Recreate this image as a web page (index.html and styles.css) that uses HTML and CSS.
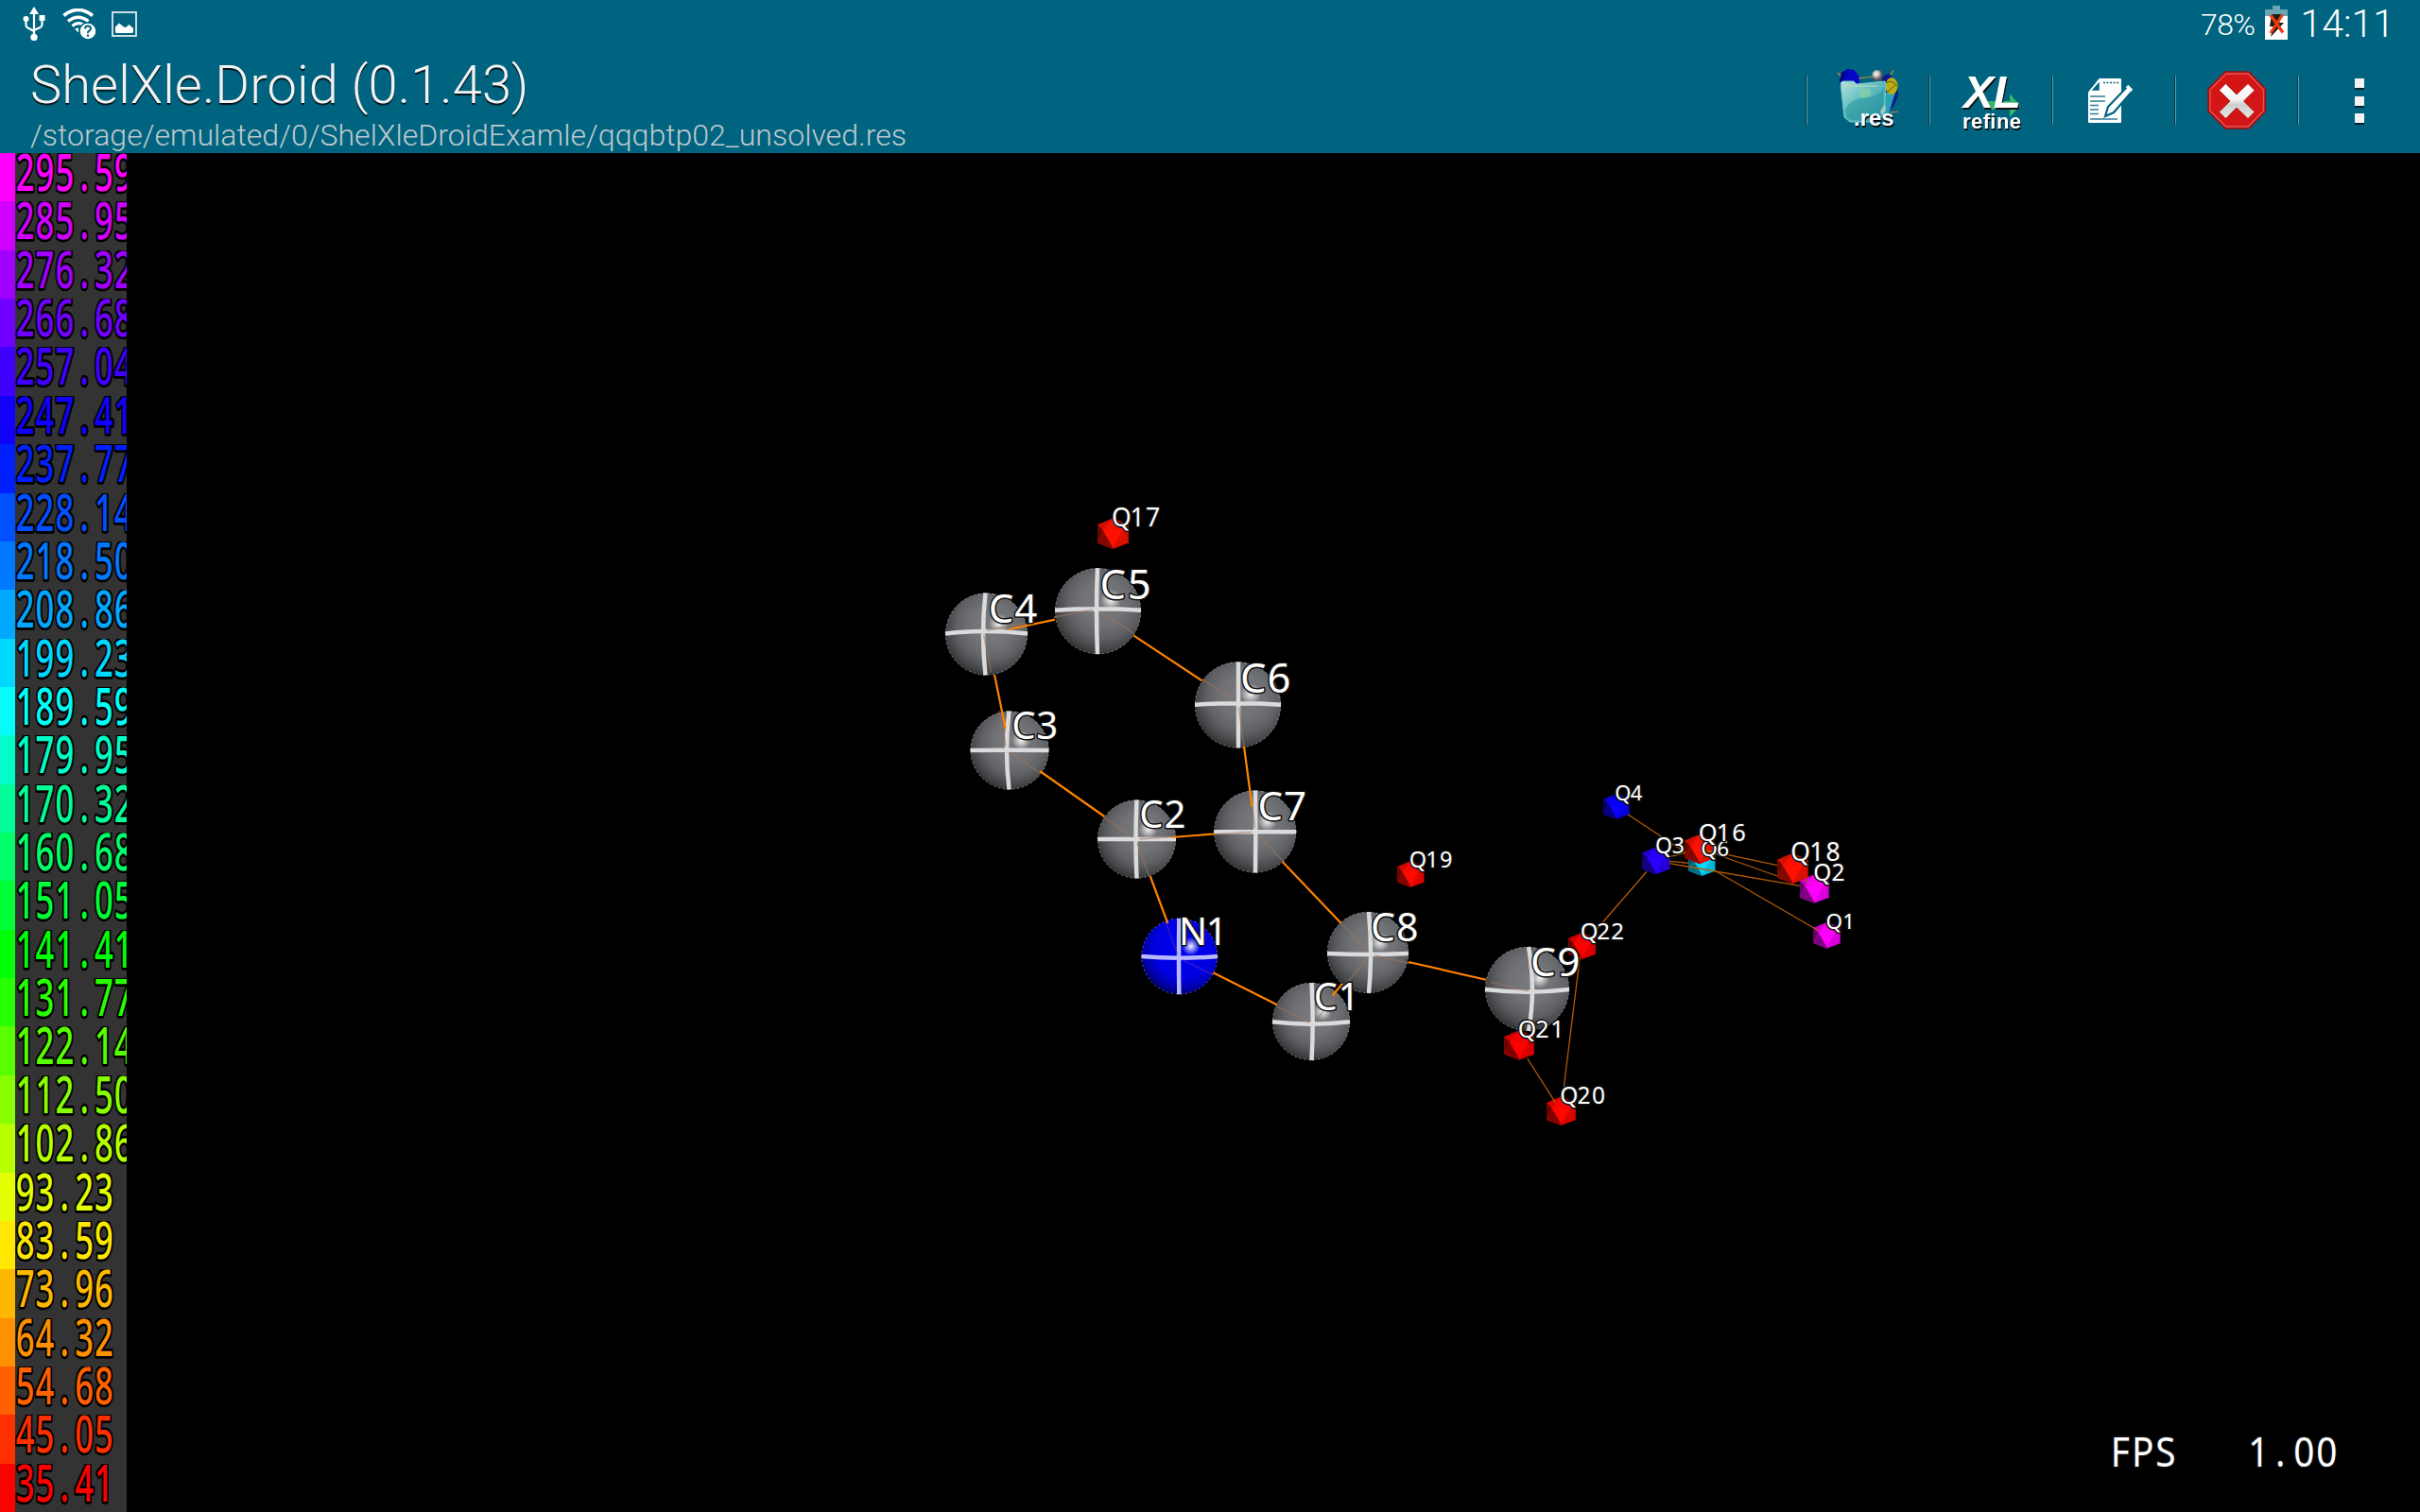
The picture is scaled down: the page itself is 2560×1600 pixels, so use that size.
FILE: index.html
```html
<!DOCTYPE html>
<html lang="en">
<head>
<meta charset="utf-8">
<title>ShelXle.Droid</title>
<link rel="stylesheet" href="styles.css">
</head>
<body>
<div class="screen">
  <header class="top">
    <div class="status">
      <svg class="st-usb" width="24" height="36" viewBox="0 0 24 36" fill="#fff" stroke="#fff">
        <path d="M12 0l5 8H7z" stroke="none"/>
        <path d="M12 6v26M3.500 13v6.500q0 2 2 3L12 26M20.500 13v6q0 2-2 3L12 25" fill="none" stroke-width="2.200"/>
        <circle cx="3.500" cy="13" r="3" stroke="none"/><rect x="17.500" y="9" width="6" height="6" stroke="none"/>
        <circle cx="12" cy="32.500" r="3.700" stroke="none"/>
      </svg>
      <svg class="st-wifi" width="36" height="33" viewBox="0 0 36 33" fill="none" stroke="#fff">
        <path d="M1.500 7.500q15-12 30.500 0" stroke-width="3.600"/>
        <path d="M6 13.500q10.500-8.500 21.500 0" stroke-width="3.400"/>
        <path d="M10.500 18.500q6-5 12-1" stroke-width="3.200"/>
        <path d="M13 21.500l4-1v5z" fill="#fff" stroke="none"/>
        <circle cx="27" cy="24" r="9" fill="#fff" stroke="#006480" stroke-width="1.500"/>
        <path d="M24 21.500q0-3 3-3t3 2.700q0 1.600-1.700 2.500T27 26" stroke="#006480" stroke-width="2"/>
        <rect x="25.900" y="27.500" width="2.200" height="2.200" fill="#006480" stroke="none"/>
      </svg>
      <svg class="st-pic" width="27" height="27" viewBox="0 0 27 27">
        <rect x="1" y="1" width="25" height="25" fill="none" stroke="#dfeaee" stroke-width="1.800"/>
        <path d="M4 22v-5.500l4-4 5 4 2 .5 3.500-3 4.500 4v4q-.5 1-2 1H6q-2 0-2-1z" fill="#fff"/>
      </svg>
      <span class="percent">78%</span>
      <svg class="st-batt" width="24" height="36" viewBox="0 0 24 36">
        <path d="M8 0h8v4h8v7H0V4h8z" fill="#6ba6b6"/><rect y="11" width="24" height="25" fill="#fff"/>
        <path d="M7 9h11l-3 9h5L6 33l3-11H5z" fill="#1c1c1c"/>
        <path d="M6 10l13 18.500M18.500 9.500L6 29" stroke="#f03a0c" stroke-width="3.200" fill="none"/>
      </svg>
      <span class="clock">14:11</span>
    </div>
    <div class="bar">
      <div class="names">
        <h1>ShelXle.Droid (0.1.43)</h1>
        <p>/storage/emulated/0/ShelXleDroidExamle/qqqbtp02_unsolved.res</p>
      </div>
      <div class="action">
        <svg class="icon" viewBox="0 0 64 64">
          <defs>
            <linearGradient id="folder" x1="0" y1="0" x2="1" y2="1"><stop offset="0" stop-color="#b4e2dc"/><stop offset=".45" stop-color="#5fbcc0"/><stop offset="1" stop-color="#2f96a4"/></linearGradient>
            <radialGradient id="ball" cx=".4" cy=".35"><stop offset="0" stop-color="#fff"/><stop offset=".5" stop-color="#bbb"/><stop offset="1" stop-color="#555"/></radialGradient>
          </defs>
          <path d="M0 3l6 6M22 9l16-2M55 7l4-7M56 45l8-1" stroke="#c98a34" stroke-width="1.200"/>
          <path d="M2 11L5 3l5-4 7 1 5 5 1 10-4 4-17-2z" fill="#0505c8"/>
          <path d="M2 12l2-9 5-3-3 12z" fill="#04047a"/>
          <path d="M46 7l8-3 8 7 2 16-4 10-6 7-6-20z" fill="#0a1a8c"/>
          <path d="M50 24h11l-7 22-6 3z" fill="#28a3b4"/>
          <ellipse cx="57" cy="17" rx="6.500" ry="9" fill="#bdae14"/>
          <path d="M51 14q6-5 12 3M53 23l9-8" stroke="#565a12" fill="none"/>
          <circle cx="42" cy="6" r="6" fill="url(#ball)"/>
          <path d="M3 14l2-2h12l3 3 30-3 1 5-2 29-8 9H13L7 50z" fill="url(#folder)" stroke="#79c8c8" stroke-width="1"/>
          <circle cx="29" cy="25" r="6" fill="#86d0a4" opacity=".75"/>
          <path d="M8 42q6-12 22-13 15-1 19-11l-2 27-9 8H14l-5-3z" fill="#229099" opacity=".5"/>
          <path d="M5 17h38" stroke="#c2d9ad" stroke-width="1"/>
          <path d="M45 44l5-8 1 6-4 6z" fill="#a9c4c6"/>
          <text class="res-text" x="17" y="58.500">.res</text>
        </svg>
      </div>
      <div class="action">
        <svg class="icon" viewBox="0 0 64 64">
          <path d="M27 33h25v-8l11 13-11 12v-8H27z" fill="#35b56c"/>
          <text class="xl-text" x="3" y="40" textLength="61">XL</text>
          <text class="refine-text" x="2" y="61.500" textLength="62">refine</text>
        </svg>
      </div>
      <div class="action">
        <svg class="icon" viewBox="0 0 64 64">
          <path d="M17 10h22v45H6V24z" fill="#fff" stroke="#fff" stroke-width="2" stroke-linejoin="round"/>
          <path d="M17.500 10.500v12H7z" fill="#006480" stroke="#fff" stroke-width="1.500"/>
          <path d="M21 13.500h17" stroke="#006480" stroke-width="1.500" stroke-dasharray="2 1.500"/>
          <path d="M7 28h16M7 33h16M7 37.500h9M7 42h9M7 46.500h9M7 52h29" stroke="#2d7d95" stroke-width="1.700"/>
          <path d="M47 17l5 5-20 23-9 4 3-10z" fill="#fff" stroke="#006480" stroke-width="2.200"/>
          <path d="M46 17l5 5" stroke="#fff" stroke-width="3.500"/>
        </svg>
      </div>
      <div class="action">
        <svg class="icon" viewBox="0 0 64 64">
          <defs><linearGradient id="cross" x2="0" y2="1"><stop offset="0" stop-color="#fff"/><stop offset=".45" stop-color="#f4f4f4"/><stop offset=".6" stop-color="#cfcfcf"/><stop offset="1" stop-color="#e6e6e6"/></linearGradient></defs>
          <path d="M20 2h25l17.500 18v24L45 62H20L2 44V20z" fill="#d41515" stroke="#8c1414" stroke-width="1.500"/>
          <path d="M20.700 4h23.600L60.500 21v22.300L44.300 60H20.700L4 43.300V21z" fill="none" stroke="#e85252" stroke-width="1.300"/>
          <path d="M20.500 14.500L32 26l12-11.500 7 7L39.500 33 51 44.500l-7 7L32 40 20.500 51.500l-7-7L25 33 13.500 21.500z" fill="url(#cross)" stroke="#a81010" stroke-width=".8"/>
        </svg>
      </div>
      <div class="action">
        <svg class="icon" viewBox="0 0 64 64">
          <g fill="#06222c"><rect x="27" y="11" width="10" height="10"/><rect x="27" y="30" width="10" height="10"/><rect x="27" y="48" width="10" height="10"/></g>
          <g fill="#f3f3f3"><rect x="27" y="9" width="10" height="10"/><rect x="27" y="28" width="10" height="10"/><rect x="27" y="46" width="10" height="10"/></g>
        </svg>
      </div>
    </div>
  </header>
  <main class="viewer">
    <div class="legend" id="legend"></div>
    <svg class="scene" id="scene" viewBox="134 162 2426 1438">
      <defs>
        <radialGradient id="carbon" cx=".56" cy=".4" r=".64">
          <stop offset="0" stop-color="#7a7b7f"/><stop offset=".4" stop-color="#717276"/><stop offset=".65" stop-color="#606165"/><stop offset=".85" stop-color="#454648"/><stop offset="1" stop-color="#28292a"/>
        </radialGradient>
        <radialGradient id="nitrogen" cx=".56" cy=".4" r=".64">
          <stop offset="0" stop-color="#0000f0"/><stop offset=".6" stop-color="#0000e2"/><stop offset=".82" stop-color="#0000a8"/><stop offset="1" stop-color="#000050"/>
        </radialGradient>
        <radialGradient id="gloss"><stop offset="0" stop-color="#fff" stop-opacity=".95"/><stop offset=".35" stop-color="#fff" stop-opacity=".6"/><stop offset="1" stop-color="#fff" stop-opacity="0"/></radialGradient>
      </defs>
    </svg>
  </main>
</div>
<script src="script.js"></script>
</body>
</html>
```
FILE: styles.css
```css
* { box-sizing: border-box; }
body { margin: 0; background: #000; }
.screen { width: 2560px; height: 1600px; display: flex; flex-direction: column; overflow: hidden; font-family: Roboto, sans-serif; }
.top { height: 162px; flex: none; background: #006480; color: #fff; display: flex; flex-direction: column; }
.status { height: 50px; display: flex; align-items: center; padding: 0 27px 0 24px; }
.st-wifi { margin-left: 18px; }
.st-pic { margin-left: 16px; }
.st-batt { margin: -2px 13px 0 11px; }
.percent { margin-left: auto; font-size: 32px; line-height: 50px; letter-spacing: -.6px; font-weight: 300; padding-top: 1px; }
.clock { font-size: 41px; line-height: 50px; font-weight: 300; }
.bar { height: 112px; display: flex; }
.names { flex: 1; padding-left: 32px; }
h1 { margin: 0; font-size: 56px; font-weight: 300; line-height: 66px; height: 70px; padding-top: 7px; letter-spacing: .08px; color: #f3f3f3; text-shadow: 0 1.500px 1px rgba(0,0,0,.8); white-space: nowrap; }
.names p { margin: 0; font-size: 32px; font-weight: 300; line-height: 38px; padding-top: 4px; letter-spacing: .03px; color: #bfc9cd; white-space: nowrap; }
.action { width: 130px; padding-left: 1px; display: flex; align-items: center; justify-content: center; background: linear-gradient(90deg, #03384a 1px, #5d99a9 1px, #5d99a9 2px, transparent 2px) 0 30px / 100% 52px no-repeat; }
.icon { width: 64px; height: 64px; overflow: visible; }
.icon text { font-family: "Liberation Sans", sans-serif; font-weight: 700; fill: #fff; filter: drop-shadow(1px 2px 0 #111); }
.res-text { font-size: 24px; }
.xl-text { font-size: 48px; font-style: italic; }
.refine-text { font-size: 22px; }
.viewer { flex: 1; display: grid; grid-template-columns: 134px 2426px; min-height: 0; }
.legend { display: grid; grid-template-rows: repeat(28, 1fr); min-height: 0; background: #333; overflow: hidden; }
.step { display: grid; grid-template-columns: 16px 118px; min-height: 0; }
.step svg { width: 118px; height: 51px; overflow: hidden; }
.step text { font: 500 55px "Noto Sans", sans-serif; text-anchor: middle; stroke: #000; stroke-width: 5.500px; stroke-linejoin: round; paint-order: stroke; }
.scene { display: block; width: 2426px; height: 1438px; background: #000; }
.scene text { font-family: "Noto Sans", sans-serif; text-anchor: middle; fill: #fff; stroke: #111; stroke-width: 3px; stroke-linejoin: round; paint-order: stroke; }
.bond { stroke: #ff8200; stroke-width: 2.200; }
.link { stroke: #b35a06; stroke-width: 1.300; }
.ghost { stroke: #a07458; stroke-width: 1.800; opacity: .5; }
.ghost.n { stroke: #4a30c8; }
.rim { fill: none; stroke: #ddd; stroke-width: 1; stroke-dasharray: 1 4; opacity: .8; }
.axis { fill: none; stroke-width: 4.500; }
```
FILE: script.js
```js
const NS = 'http://www.w3.org/2000/svg';
const add = (parent, tag, attrs, text) => {
  const el = document.createElementNS(NS, tag);
  for (const k in attrs) el.setAttribute(k, attrs[k]);
  if (text) el.textContent = text;
  parent.appendChild(el);
  return el;
};

// Density scale, highest peak first
const steps = [
  ['295.59', '#ff00ff'], ['285.95', '#d000ff'], ['276.32', '#a000ff'], ['266.68', '#7000ff'],
  ['257.04', '#4000ff'], ['247.41', '#1000ff'], ['237.77', '#0020ff'], ['228.14', '#0050ff'],
  ['218.50', '#0078ff'], ['208.86', '#00a8ff'], ['199.23', '#00d8ff'], ['189.59', '#00fff8'],
  ['179.95', '#00ffc8'], ['170.32', '#00ff98'], ['160.68', '#00ff68'], ['151.05', '#00ff38'],
  ['141.41', '#00ff08'], ['131.77', '#28ff00'], ['122.14', '#58ff00'], ['112.50', '#88ff00'],
  ['102.86', '#b8ff00'], ['93.23', '#e4ff00'], ['83.59', '#ffe800'], ['73.96', '#ffb800'],
  ['64.32', '#ff9000'], ['54.68', '#ff6000'], ['45.05', '#ff3000'], ['35.41', '#ff0000']
];
const SX = 0.63;
const legend = document.getElementById('legend');
for (const [value, color] of steps) {
  const row = document.createElement('div');
  row.className = 'step';
  const chip = document.createElement('div');
  chip.style.background = color;
  row.appendChild(chip);
  const svg = add(row, 'svg', { viewBox: '0 0 118 51' });
  const xs = [...value].map((c, i) => (10.7 + 20.8 * i) / SX);
  add(svg, 'text', { x: xs.join(' '), y: 39.5, transform: `scale(${SX} 1)`, fill: color }, value);
  legend.appendChild(row);
}

const scene = document.getElementById('scene');
// name, cx, cy, r, axis crossing x/y, axis end x/y
const atoms = [
  ['C4', 1043.5, 671, 43.5, 1040, 668, 1042.5, 670.5], ['C5', 1161.5, 646.7, 45.5, 1160, 644.3, 1161, 645.7],
  ['C6', 1309.5, 746, 45.5, 1310, 744.3, 1310, 745.7], ['C3', 1068, 794, 41.5, 1065, 793.7, 1067.5, 794],
  ['C2', 1202.5, 888, 41.5, 1201.5, 888, 1202.5, 888], ['C7', 1327.7, 880, 43.5, 1328.3, 880.3, 1328, 880.3],
  ['N1', 1247.7, 1012, 40.3, 1247, 1013.7, 1247.3, 1012], ['C1', 1387, 1081, 41, 1388.7, 1083.7, 1387.5, 1081.3],
  ['C8', 1447, 1008, 43, 1450, 1010, 1448, 1009], ['C9', 1615.5, 1046.5, 44.5, 1621, 1049.7, 1617, 1047]
];
const at = Object.fromEntries(atoms.map(a => [a[0], a]));
for (const [name, cx, cy, r, mx, my, ex, ey] of atoms) {
  const n = name[0] === 'N';
  add(scene, 'circle', { cx, cy, r, fill: n ? 'url(#nitrogen)' : 'url(#carbon)' });
  add(scene, 'circle', { cx, cy, r: r - 0.3, class: 'rim' });
  add(scene, 'circle', { cx: cx + r * 0.3, cy: cy - r * 0.26, r: r * 0.24, fill: 'url(#gloss)' });
  const d = `M${ex} ${cy - r}Q${2 * mx - ex} ${cy} ${ex} ${cy + r}M${cx - r} ${ey}Q${cx} ${2 * my - ey} ${cx + r} ${ey}`;
  add(scene, 'path', { d, class: 'axis', stroke: n ? '#b9b9ff' : '#dadbdc' });
}
const pairs = ['C4 C5', 'C5 C6', 'C4 C3', 'C3 C2', 'C6 C7', 'C2 C7', 'C2 N1', 'N1 C1', 'C7 C8', 'C8 C1', 'C8 C9'];
for (const p of pairs) {
  const [a, b] = p.split(' ').map(k => at[k]);
  const len = Math.hypot(b[1] - a[1], b[2] - a[2]);
  for (const [s, e] of [[a, b], [b, a]]) {
    const t = Math.min(1, s[3] / len), g = 4 / len;
    add(scene, 'line', {
      x1: s[4] + (e[4] - s[4]) * g, y1: s[5] + (e[5] - s[5]) * g,
      x2: s[4] + (e[4] - s[4]) * t, y2: s[5] + (e[5] - s[5]) * t, class: s[0] === 'N1' ? 'ghost n' : 'ghost'
    });
  }
}
const bonds = [
  [1067.5, 666, 1116, 655.7], [1199, 672.3, 1271.5, 720.3], [1052, 714, 1063.7, 771], [1100, 816, 1168.3, 864],
  [1316, 790, 1324.5, 853.5], [1240, 886, 1284.5, 882.5], [1216.7, 927, 1235.3, 977], [1283.3, 1029.3, 1351, 1063.3],
  [1356.7, 912, 1418.7, 977], [1409.5, 1053.5, 1420, 1041], [1490, 1018, 1572, 1036.7]
];
for (const [x1, y1, x2, y2] of bonds) add(scene, 'line', { x1, y1, x2, y2, class: 'bond' });

// Residual peaks as shaded icosahedra
const facets = [
  ['0,-1 1,-.57 1,.6 0,1 -1,.6 -1,-.57', 0.18], ['-.65,-.2 .65,-.25 0,.92', 0], ['-.65,-.2 0,-1 .65,-.25', 0.03],
  ['.65,-.25 1,.6 0,.92', 0.14], ['-1,-.57 -.65,-.2 -1,.6', 0.6], ['-.65,-.2 -1,.6 0,.92', 0.5], ['-1,.6 0,.92 0,1', 0.65]
];
const peaks = [
  ['Q17', 1177.4, 564.7, 16.4, '#ff1200'], ['Q19', 1492.4, 925, 14, '#ff0a00'], ['Q22', 1673.7, 1001, 14.3, '#ff0000'],
  ['Q21', 1607.1, 1106, 15.8, '#ff0000'], ['Q20', 1651.4, 1175.7, 15.4, '#ff0600'], ['Q4', 1710.1, 853.3, 13.5, '#0a00ff'],
  ['Q3', 1751.9, 910.7, 14.6, '#2a00ff'], ['Q6', 1800.4, 913, 14, '#00d8ff'], ['Q16', 1798.2, 898.5, 15.8, '#ff1200'],
  ['Q2', 1919.4, 940.5, 15.3, '#ff00ff'], ['Q18', 1896.4, 919, 16.3, '#ff1200'], ['Q1', 1932.7, 989.7, 14, '#ff00ff']
];
for (const [, x, y, r, color] of peaks) {
  const g = add(scene, 'g', { transform: `translate(${x} ${y}) scale(${r})` });
  facets.forEach(([points, dark]) => {
    add(g, 'polygon', { points, fill: color });
    add(g, 'polygon', { points, fill: '#000', 'fill-opacity': dark });
  });
}
const links = [
  [1688.5, 984, 1742, 922.3], [1671.3, 1013, 1654, 1153], [1615.7, 1120, 1645.3, 1166.7], [1722, 861.7, 1782.7, 902],
  [1766, 911.3, 1786, 913.3], [1766, 913.7, 1904, 937.3], [1766, 906.7, 1782.7, 902.7], [1800, 898.7, 1880, 915.7],
  [1807, 901, 1880, 927], [1910, 931, 1913.5, 935], [1814, 921.3, 1924, 985]
];
for (const [x1, y1, x2, y2] of links) add(scene, 'line', { x1, y1, x2, y2, class: 'link' });

// text, centre x of first glyph, baseline, font size, advance
const labels = [
  ['C4', 1059, 658.7, 42, 26.3], ['C5', 1177.3, 634, 43.5, 28], ['C6', 1325.7, 732.7, 43.5, 27.3], ['C3', 1083, 782, 40, 24.8],
  ['C2', 1218, 876.3, 40, 24.9], ['C7', 1343.7, 868.3, 42, 26.3], ['N1', 1262, 1000.3, 39.5, 25], ['C8', 1463, 995.7, 41, 25.8],
  ['C1', 1402.3, 1069.3, 39.5, 24.6], ['C9', 1632.5, 1033.3, 42.5, 27],
  ['Q17', 1186.4, 557.3, 26.5, 16.6], ['Q19', 1500, 918.3, 23.5, 14.9], ['Q22', 1681, 994.3, 24, 15.1], ['Q21', 1615.4, 1098.3, 25, 16],
  ['Q20', 1659.7, 1168.3, 24.5, 15.7], ['Q4', 1716.8, 846.5, 22, 14.3], ['Q3', 1760, 902.8, 23, 15.4], ['Q6', 1808, 906.3, 22.5, 14.7],
  ['Q16', 1806.7, 890.3, 25.5, 16.4], ['Q18', 1904.6, 911.3, 26.5, 17.2], ['Q2', 1927.8, 932.3, 24.5, 16.7], ['Q1', 1940.3, 983, 22.5, 15.3]
];
for (const [text, x, y, size, adv] of labels)
  add(scene, 'text', { x: [...text].map((c, i) => x + adv * i).join(' '), y, 'font-size': size }, text);

const fx = 0.88;
add(scene, 'text', { x: [2242.8, 2266.8, 2291].map(v => v / fx).join(' '), y: 1552.5, 'font-size': 44, transform: `scale(${fx} 1)` }, 'FPS');
add(scene, 'text', { x: [2389.3, 2412.3, 2437.3, 2461.3].map(v => v / fx).join(' '), y: 1552.5, 'font-size': 44, transform: `scale(${fx} 1)` }, '1.00');
```
